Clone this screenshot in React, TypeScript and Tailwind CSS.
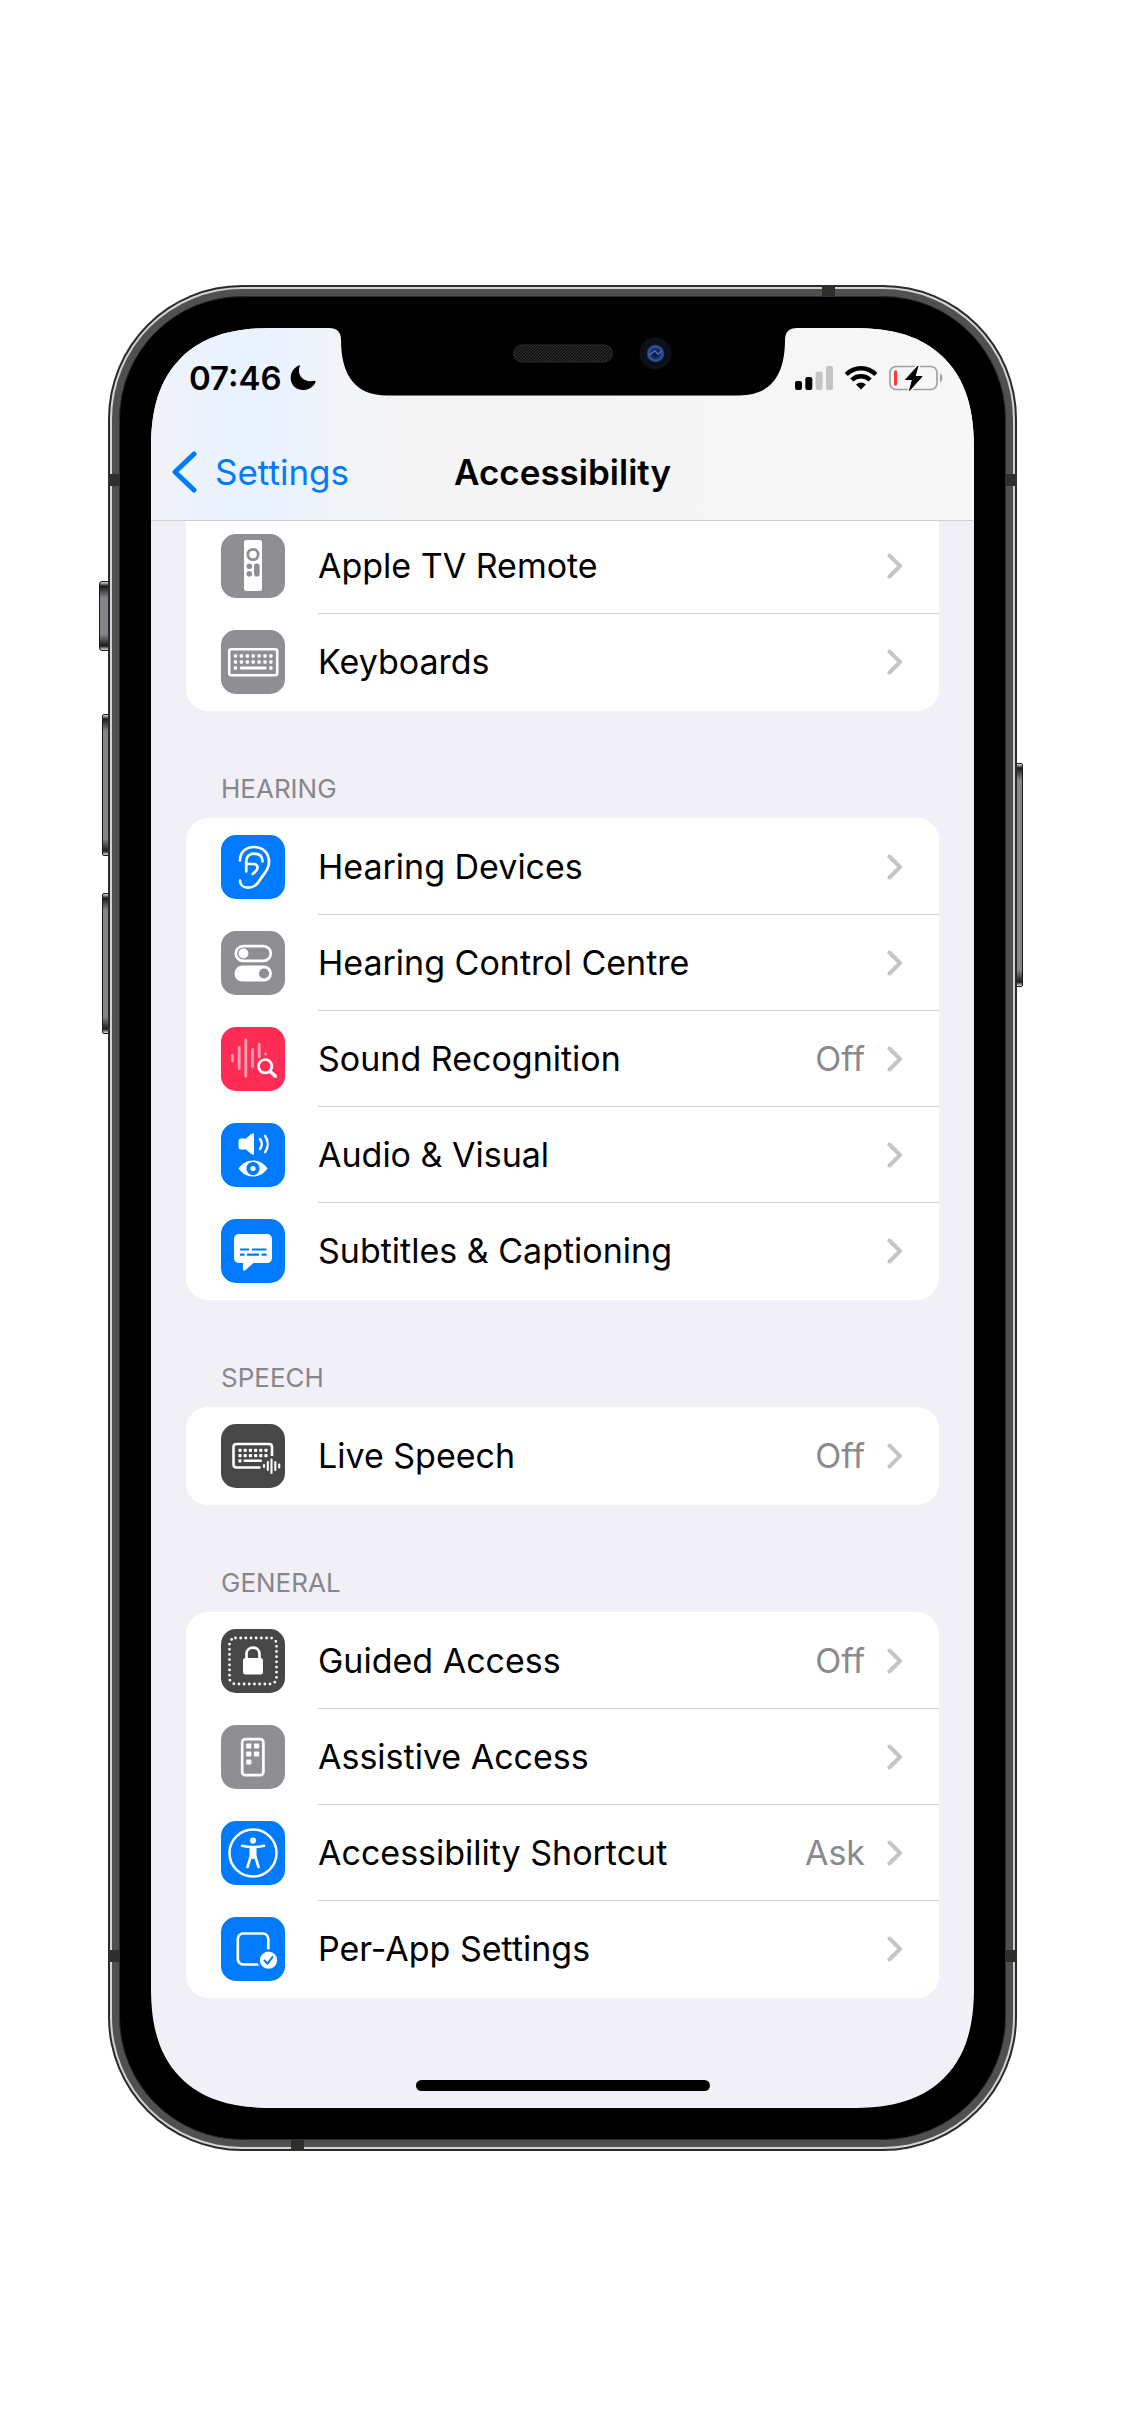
import React from "react";

type Row = { label: string; value?: string; tint: string; icon: React.ReactNode };

const GREY = "bg-[#8e8e93]";
const BLUE = "bg-[#007aff]";
const DARK = "bg-[#474747]";
const PINK = "bg-[#ff2d55]";

function Glyph({ children }: { children: React.ReactNode }) {
  return (
    <svg viewBox="0 0 64 64" className="size-16" fill="none" aria-hidden="true">
      {children}
    </svg>
  );
}

const dots = (xs: number[], y: number, s: number) =>
  xs.map((x) => <rect key={`${x}-${y}`} x={x - s / 2} y={y - s / 2} width={s} height={s} rx={s / 4} fill="#fff" />);

const remoteIcon = (
  <Glyph>
    <rect x="23" y="6" width="18" height="51" rx="2.5" fill="#fff" />
    <circle cx="32" cy="20.5" r="5.2" stroke="#8e8e93" strokeWidth="2.8" />
    <circle cx="28.3" cy="32.3" r="2.8" fill="#8e8e93" />
    <circle cx="28.3" cy="39.7" r="2.8" fill="#8e8e93" />
    <rect x="33" y="29.5" width="5.6" height="13" rx="2.6" fill="#8e8e93" />
  </Glyph>
);

const keyboardIcon = (
  <Glyph>
    <rect x="8.2" y="19.2" width="48" height="26" rx="2" stroke="#fff" strokeWidth="2.6" />
    {dots([14.5, 20.4, 26.3, 32.2, 38.1, 44, 49.9], 26, 3.3)}
    {dots([14.5, 20.4, 26.3, 32.2, 38.1, 44, 49.9], 32, 3.3)}
    {dots([14.5, 49.9], 38, 3.3)}
    <rect x="19" y="36.6" width="26.4" height="2.8" rx="1" fill="#fff" />
  </Glyph>
);

const earIcon = (
  <Glyph>
    <g stroke="#fff" strokeWidth="2.7" strokeLinecap="round" strokeLinejoin="round">
      <path d="M19 25.5C19 17 25 12 33 12C42 12 48 18 48 27C48 35 43 38.5 39.5 44C36.5 49 33.5 52.700 27 52.700C22 52.700 19 49.5 19 45.5" />
      <path d="M25.2 36.5V27C25.2 21.5 28.5 18.7 33 18.7C38.5 18.7 41.5 21.5 41.5 26.5" />
      <path d="M25.2 29H32.5C36.5 29 37.5 32.5 35.5 35.3C34.5 36.8 33 38 31.7 39" />
    </g>
  </Glyph>
);

const togglesIcon = (
  <Glyph>
    <rect x="14.8" y="15.1" width="35" height="14.8" rx="7.4" stroke="#fff" strokeWidth="2.7" />
    <circle cx="22.5" cy="22.5" r="4.9" fill="#fff" />
    <rect x="13.5" y="34.5" width="37.5" height="16" rx="8" fill="#fff" />
    <circle cx="43" cy="42.5" r="5.1" fill="#8e8e93" />
  </Glyph>
);

const soundIcon = (
  <Glyph>
    <g stroke="#ff9fb2" strokeWidth="2.8" strokeLinecap="round">
      <path d="M11.5 28.5v5.5M18.2 20.5v21M24.8 12.8v36.5M31.5 22.5v17M38.2 17.5v12.5M44.6 26.8v.2" />
    </g>
    <circle cx="44.2" cy="39.2" r="9.3" fill="#ff2d55" />
    <circle cx="44.2" cy="39.2" r="6.7" stroke="#fff" strokeWidth="2.7" />
    <path d="M49.3 44.5l5 4.8" stroke="#fff" strokeWidth="3.4" strokeLinecap="round" />
  </Glyph>
);

const audioVisualIcon = (
  <Glyph>
    <path d="M20 15.5h5l6-5q2-1 2 1v19q0 2-2 1l-6-5h-5q-2.500 0-2.500-2.500v-6q0-2.500 2.500-2.500z" fill="#fff" />
    <path d="M39 16c2.200 3 2.200 7 0 10M44 12.8c3.600 5 3.600 11.500 0 16.500" stroke="#fff" strokeWidth="2.4" strokeLinecap="round" />
    <path d="M17.5 45.5C21 40.5 26 37.5 32 37.5S43 40.5 46.5 45.5C43 50.5 38 53.5 32 53.5S21 50.5 17.5 45.5Z" fill="#fff" />
    <circle cx="32" cy="45.5" r="4.6" fill="#fff" stroke="#007aff" strokeWidth="4" />
  </Glyph>
);

const captionIcon = (
  <Glyph>
    <path d="M18.5 15h27q5.500 0 5.500 5.500v18q0 5.500-5.500 5.500H32.5l-8.500 7.500q-2 1-2-1V44h-3.500q-5.500 0-5.500-5.500v-18q0-5.500 5.500-5.500z" fill="#fff" />
    <path d="M19 30.5h9M31 30.5h14.5M19 35.7h4.5M26 35.7h12M40.5 35.7h5" stroke="#007aff" strokeWidth="2.2" />
  </Glyph>
);

const liveSpeechIcon = (
  <Glyph>
    <path d="M39.500 43.500H15.500q-3 0-3-3V23q0-3 3-3h32.500q3 0 3 3v9" stroke="#fff" strokeWidth="2.600" />
    {dots([19, 24.2, 29.4, 34.6, 39.8, 45], 26.3, 3.2)}
    {dots([19, 24.2, 29.4, 34.6, 39.8, 45], 31.6, 3.2)}
    {dots([19], 36.800, 3.2)}
    <rect x="22.500" y="35.500" width="18.500" height="2.600" rx="1" fill="#fff" />
    <path d="M43 41v2M46.800 38v8M50.500 35.500v13.500M54.300 38v8M58.200 40.500v3" stroke="#fff" strokeWidth="2.100" strokeLinecap="round" />
  </Glyph>
);

const guidedIcon = (
  <Glyph>
    <rect x="8.5" y="9" width="47" height="46" rx="6" stroke="#fff" strokeWidth="2.8" strokeLinecap="round" strokeDasharray="0 5.17" />
    <rect x="22" y="29" width="20" height="16.5" rx="2.5" fill="#fff" />
    <path d="M25.5 30v-5c0-8.500 13-8.500 13 0v5" stroke="#fff" strokeWidth="2.7" />
  </Glyph>
);

const assistiveIcon = (
  <Glyph>
    <rect x="21.2" y="14.2" width="21.2" height="36" rx="3" stroke="#fff" strokeWidth="2.7" />
    {[[25.2, 18.5], [33, 18.5], [25.2, 26.5], [33, 26.5], [25.2, 34.5]].map(([x, y]) => (
      <rect key={`${x}-${y}`} x={x} y={y} width="5.2" height="5" rx="1" fill="#fff" />
    ))}
  </Glyph>
);

const accessIcon = (
  <Glyph>
    <circle cx="32" cy="32" r="23.5" stroke="#fff" strokeWidth="2.5" />
    <circle cx="32" cy="19.6" r="3.1" fill="#fff" />
    <path d="M21 24.8c7.500 1.800 14.500 1.800 22 0" stroke="#fff" strokeWidth="2.5" strokeLinecap="round" />
    <path d="M28.5 26h7v11l-3.500 1-3.500-1z" fill="#fff" />
    <path d="M29.7 35.5l-3.200 10.500M34.300 35.5l3.200 10.500" stroke="#fff" strokeWidth="2.6" strokeLinecap="round" />
  </Glyph>
);

const perAppIcon = (
  <Glyph>
    <rect x="16.8" y="16.5" width="30.5" height="31" rx="5.5" stroke="#fff" strokeWidth="2.7" />
    <circle cx="47.5" cy="43.2" r="11" fill="#007aff" />
    <circle cx="47.5" cy="43.2" r="8.6" fill="#fff" />
    <path d="M43.5 43.5l3 3.200 5-6.700" stroke="#007aff" strokeWidth="2" strokeLinecap="round" strokeLinejoin="round" />
  </Glyph>
);

const input: Row[] = [
  { label: "Apple TV Remote", tint: GREY, icon: remoteIcon },
  { label: "Keyboards", tint: GREY, icon: keyboardIcon },
];

const groups: { title: string; rows: Row[] }[] = [
  {
    title: "HEARING",
    rows: [
      { label: "Hearing Devices", tint: BLUE, icon: earIcon },
      { label: "Hearing Control Centre", tint: GREY, icon: togglesIcon },
      { label: "Sound Recognition", value: "Off", tint: PINK, icon: soundIcon },
      { label: "Audio & Visual", tint: BLUE, icon: audioVisualIcon },
      { label: "Subtitles & Captioning", tint: BLUE, icon: captionIcon },
    ],
  },
  { title: "SPEECH", rows: [{ label: "Live Speech", value: "Off", tint: DARK, icon: liveSpeechIcon }] },
  {
    title: "GENERAL",
    rows: [
      { label: "Guided Access", value: "Off", tint: DARK, icon: guidedIcon },
      { label: "Assistive Access", tint: GREY, icon: assistiveIcon },
      { label: "Accessibility Shortcut", value: "Ask", tint: BLUE, icon: accessIcon },
      { label: "Per-App Settings", tint: BLUE, icon: perAppIcon },
    ],
  },
];

function Card({ rows, rounding = "rounded-[22px]" }: { rows: Row[]; rounding?: string }) {
  return (
    <ul className={`bg-white py-px ${rounding}`}>
      {rows.map((row, i) => (
        <li key={row.label}>
          <a href="#" className="flex h-24 items-center gap-[33px] pl-[35px]">
            <span className={`size-16 shrink-0 overflow-hidden rounded-[15px] ${row.tint}`}>{row.icon}</span>
            <span
              className={`flex h-24 flex-1 items-center gap-[22px] pr-9 ${i < rows.length - 1 ? "border-b border-[#d4d4d7]" : ""}`}
            >
              <span className="flex-1 whitespace-nowrap">{row.label}</span>
              {row.value && <span className="text-[#8a8a8e]">{row.value}</span>}
              <svg viewBox="0 0 16 26" className="h-[26px] w-4" fill="none" aria-hidden="true">
                <path d="M2.5 2.5L13 13L2.5 23.5" stroke="#c5c5c7" strokeWidth="4" strokeLinecap="round" strokeLinejoin="round" />
              </svg>
            </span>
          </a>
        </li>
      ))}
    </ul>
  );
}

function StatusBar() {
  return (
    <div className="flex h-[100px] items-center justify-between pr-[31px] pl-[38px]">
      <div className="flex items-center gap-2 text-[33px] font-semibold">
        <time>07:46</time>
        <svg viewBox="0 0 26 26" className="size-[26px]" aria-label="Do not disturb">
          <path d="M10 .8C6.5 8 11.5 18.3 24.8 15.8Q25.800 15.800 25.500 17C20.500 29 1 27.500 .7 13C.7 7 4.200 2.500 8.800 .5Q10.200 0 10 .8Z" fill="#000" />
        </svg>
      </div>
      <div className="flex items-center gap-[11px]">
        <svg viewBox="0 0 38 24" className="h-6 w-[38px]" aria-label="Signal">
          <rect x="0" y="15" width="7" height="9" rx="2" />
          <rect x="10.3" y="11" width="7" height="13" rx="2" />
          <rect x="20.6" y="5.5" width="7" height="18.5" rx="2" fill="#c4c4c4" />
          <rect x="31" y="0" width="7" height="24" rx="2" fill="#c4c4c4" />
        </svg>
        <svg viewBox="0 0 34 24" className="h-6 w-[34px]" fill="none" aria-label="Wi-Fi">
          <path d="M2.2 8.5C10.5 .2 23.5 .2 31.8 8.5" stroke="#000" strokeWidth="4.4" />
          <path d="M7.8 14C13 9 21 9 26.2 14" stroke="#000" strokeWidth="4.4" />
          <path d="M17 23.5l-5-5q5-4 10 0z" fill="#000" />
        </svg>
        <svg viewBox="0 0 54 26" className="h-[26px] w-[54px]" fill="none" aria-label="Battery charging">
          <rect x="1" y="1.5" width="47" height="23" rx="6" stroke="#a0a0a1" strokeWidth="1.7" />
          <path d="M51 8.500c3.200 1 3.200 8 0 9z" fill="#a0a0a1" />
          <rect x="5" y="5.5" width="3" height="15" rx="1.200" fill="#ff3b30" />
          <path d="M29 1L16.5 14.500h7L20.500 25.500L33 11.500H26z" fill="#000" stroke="#f6f6f6" strokeWidth="4" strokeLinejoin="round" />
          <path d="M29 1L16.5 14.500h7L20.500 25.500L33 11.500H26z" fill="#000" stroke="#000" strokeLinejoin="round" />
        </svg>
      </div>
    </div>
  );
}

function Notch() {
  return (
    <div className="absolute inset-x-0 top-0 z-20 flex justify-center">
      <svg viewBox="0 0 468 68" className="h-[68px] w-[468px]" fill="none" aria-hidden="true">
        <defs>
          <pattern id="mesh" width="3" height="3" patternUnits="userSpaceOnUse">
            <rect width="3" height="3" fill="#111" />
            <path d="M0 3L3 0" stroke="#333" strokeWidth="1" />
          </pattern>
          <radialGradient id="lens">
            <stop offset="0" stopColor="#0b1430" />
            <stop offset=".45" stopColor="#16265c" />
            <stop offset=".8" stopColor="#35569f" />
            <stop offset="1" stopColor="#142448" />
          </radialGradient>
        </defs>
        <path d="M0 0C8 0 12 4 12 12C12 48 27 67.5 58 67.5H410C441 67.5 456 48 456 12C456 4 460 0 468 0Z" fill="#000" />
        <rect x="184.5" y="17" width="99" height="17" rx="8.5" fill="url(#mesh)" stroke="#2c2c2c" />
        <circle cx="326.5" cy="25.5" r="16" fill="#0c1017" />
        <circle cx="326.5" cy="25.5" r="9" fill="url(#lens)" />
        <path d="M320 27l6-4 3 3 4-3" stroke="#4a6fc0" strokeWidth="1.5" />
      </svg>
    </div>
  );
}

const band = "absolute bg-[#2f2e2b]";
const sideKey =
  "absolute border border-[#1b1b1b] bg-[linear-gradient(180deg,#e0e0e0_0,#1b1b1b_4px,#85858a_16px,#85858a_calc(100%-16px),#1b1b1b_calc(100%-4px),#e0e0e0_100%)]";

export default function App() {
  return (
    <div className="flex min-h-screen w-full items-center justify-center bg-white px-[108px] font-['Inter','Liberation_Sans',sans-serif] text-[34px] leading-[42px] text-black">
      <div className="relative w-full max-w-[909px]">
        <div className={`${sideKey} top-[296px] -left-[9px] h-[70px] w-[10px] rounded-l-[3px]`} />
        <div className={`${sideKey} top-[429px] -left-[6px] h-[142px] w-[7px] rounded-l-[2px]`} />
        <div className={`${sideKey} top-[608px] -left-[6px] h-[141px] w-[7px] rounded-l-[2px]`} />
        <div className={`${sideKey} top-[478px] -right-[6px] h-[224px] w-[7px] rounded-r-[2px]`} />

        <div className="relative rounded-[134px] bg-[#2b2b2b] p-[2px]">
          <div className="rounded-[132px] bg-[#d4d2d4] p-[2px]">
            <div className="rounded-[130px] bg-[#505050] p-[7px]">
              <div className="rounded-[123px] border border-[#2b2b2b] bg-black p-[31px]">
                <div className="relative overflow-hidden rounded-[122px] bg-[#f1f0f6] [corner-shape:superellipse(1.3)]">
                  <header className="relative z-10 border-b border-[#cfcfd2] bg-[linear-gradient(90deg,#f1f3f9_0%,#e9f2fe_9%,#e9f2fe_15%,#f3f4f6_24%,#f4f4f4_45%,#f7f7f7_100%)]">
                    <StatusBar />
                    <div className="grid h-[92px] grid-cols-[1fr_auto_1fr] items-center px-5 pb-1 text-[35px]">
                      <button type="button" className="flex items-center gap-[18px] text-[#007aff]">
                        <svg viewBox="0 0 26 42" className="h-[42px] w-[26px]" fill="none" aria-hidden="true">
                          <path d="M23 3L4 21L23 39" stroke="#007aff" strokeWidth="5" strokeLinecap="round" strokeLinejoin="round" />
                        </svg>
                        Settings
                      </button>
                      <h1 className="font-semibold">Accessibility</h1>
                    </div>
                  </header>
                  <Notch />

                  <main className="-mt-1 px-[35px] pb-[82px]">
                    <Card rows={input} rounding="rounded-b-[22px]" />
                    {groups.map((group) => (
                      <section key={group.title}>
                        <h2 className="flex h-[107px] items-end px-[35px] pb-[13px] text-[26px] leading-8 text-[#86868b]">
                          {group.title}
                        </h2>
                        <Card rows={group.rows} />
                      </section>
                    ))}
                  </main>
                  <div className="mx-auto mb-[17px] h-[11px] w-[294px] rounded-full bg-black" />
                </div>
              </div>
            </div>
          </div>
          <div className={`${band} top-[189px] left-0 h-3 w-3`} />
          <div className={`${band} top-[189px] right-0 h-3 w-3`} />
          <div className={`${band} bottom-[189px] left-0 h-3 w-3`} />
          <div className={`${band} right-0 bottom-[189px] h-3 w-3`} />
          <div className={`${band} top-0 right-[182px] h-3 w-[13px]`} />
          <div className={`${band} bottom-0 left-[183px] h-3 w-[13px]`} />
        </div>
      </div>
    </div>
  );
}
